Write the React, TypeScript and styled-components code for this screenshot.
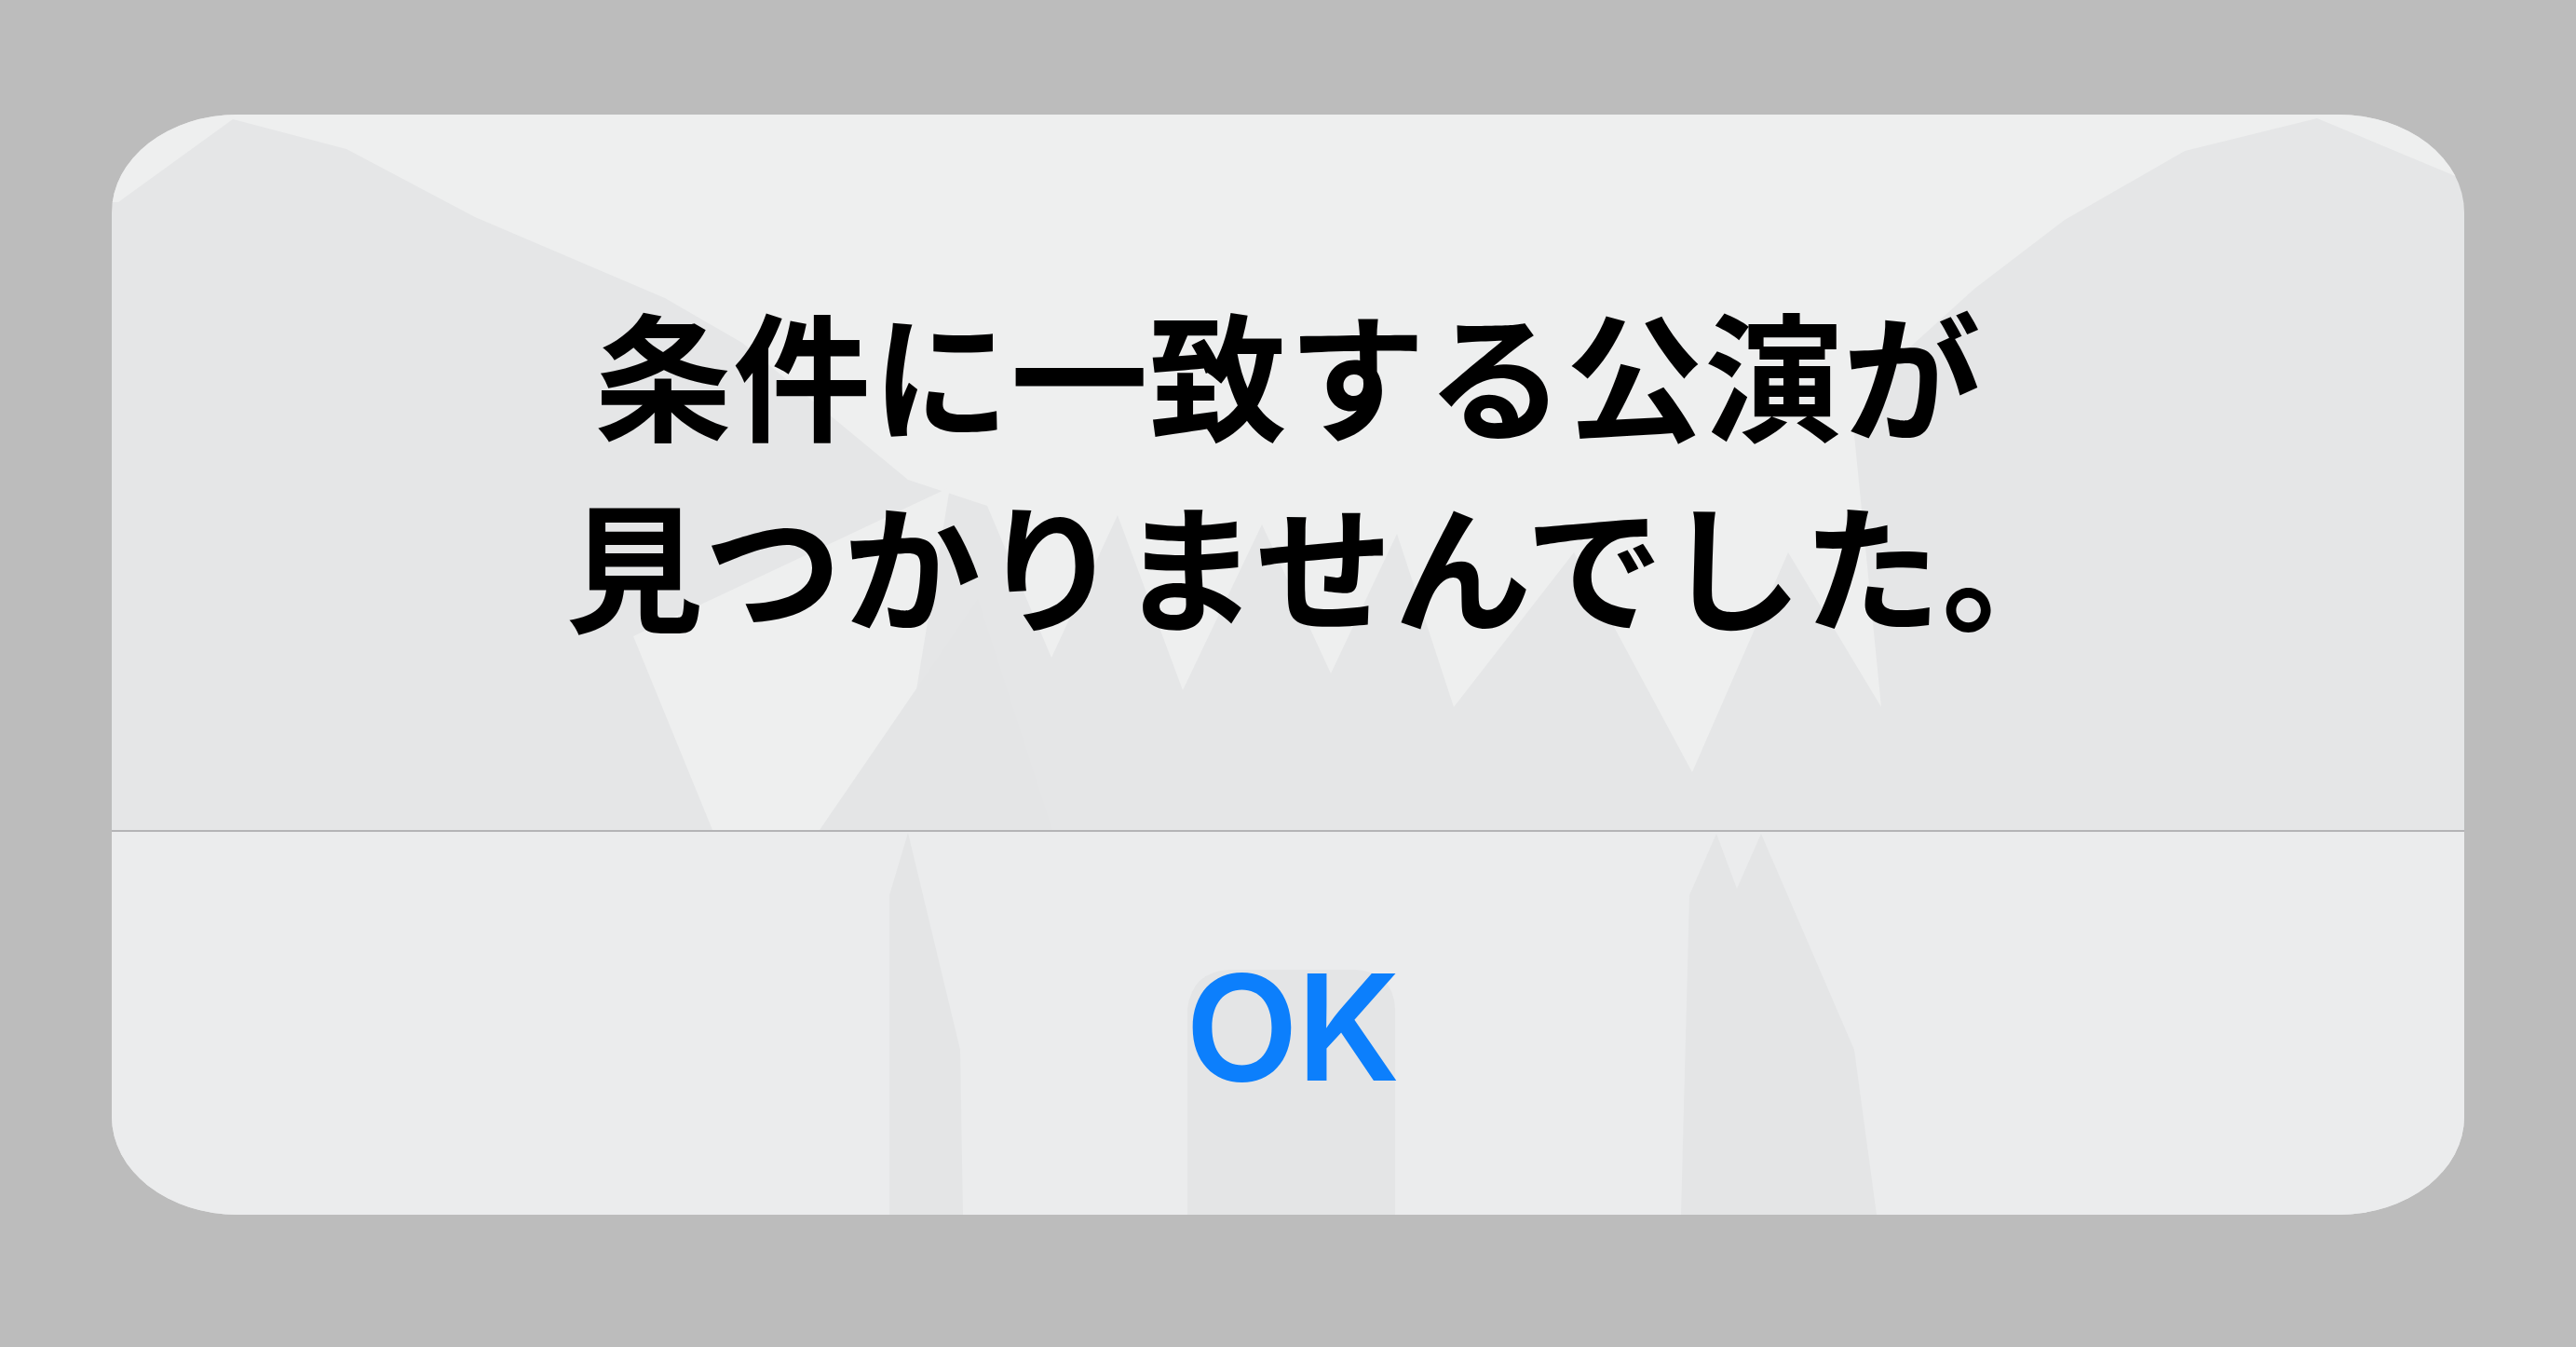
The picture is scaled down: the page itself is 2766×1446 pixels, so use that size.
import React from "react";
import styled, { createGlobalStyle } from "styled-components";

const GlobalStyle = createGlobalStyle`
  html, body {
    margin: 0;
    padding: 0;
    background: #bcbcbc;
  }
  #root {
    min-height: 100vh;
  }
`;

const Page = styled.div`
  width: 2766px;
  height: 1446px;
  box-sizing: border-box;
  padding-top: 123px;
  display: flex;
  justify-content: center;
  align-items: flex-start;
  background: #bcbcbc;
`;

const Dialog = styled.div`
  position: relative;
  width: 2526px;
  height: 1181px;
  border-radius: 135px / 105px;
  overflow: hidden;
  background: #e5e6e7;
  display: flex;
  flex-direction: column;
`;

const Backdrop = styled.svg`
  position: absolute;
  inset: 0;
  width: 100%;
  height: 100%;
  z-index: 0;
`;

const Message = styled.div`
  position: relative;
  z-index: 1;
  height: 768px;
  box-sizing: border-box;
  padding-bottom: 14px;
  display: flex;
  align-items: center;
  justify-content: center;
`;

const Title = styled.p`
  margin: 0;
  text-align: center;
  font-family: "Noto Sans CJK JP", "Noto Sans", sans-serif;
  font-weight: 700;
  font-size: 148px;
  line-height: 205px;
  letter-spacing: 1px;
  color: #000;
`;

const Punct = styled.span`
  letter-spacing: -0.5em;
`;

const Divider = styled.div`
  position: relative;
  z-index: 1;
  height: 2px;
  background: #b4b4b6;
`;

const ButtonRow = styled.div`
  position: relative;
  z-index: 1;
  flex: 1;
  display: flex;
  align-items: center;
  justify-content: center;
`;

const ActionButton = styled.button`
  border: none;
  background: transparent;
  padding: 0;
  font-family: Inter, "Noto Sans", sans-serif;
  font-weight: 600;
  font-size: 158px;
  line-height: 1;
  letter-spacing: -2px;
  color: #0c7ffc;
  cursor: pointer;
  transform: translate(4px, 4px);
`;

const LIGHT = "#eeefef";
const LIGHT_BTN = "#ebeced";
const DARK = "#e4e5e6";

export default function App() {
  return (
    <>
      <GlobalStyle />
      <Page>
        <Dialog role="alertdialog">
          <Backdrop viewBox="0 0 2526 1181" preserveAspectRatio="none" aria-hidden="true">
            <polygon
              fill={LIGHT}
              points="0,0 2526,0 2526,70 2368,4 2226,39 2097,113 2000,187 1903,275 1871,344 1900,636 1800,470 1697,706 1570,470 1441,636 1380,450 1309,600 1235,440 1150,618 1080,430 1009,583 940,420 855,392 677,245 594,197 390,110 252,37 130,5 7,94 0,94"
            />
            <polygon fill={LIGHT} points="560,560 900,400 839,768 645,768" />
            <polygon fill={DARK} points="760,768 930,520 1010,768" />
            <rect x="0" y="770" width="2526" height="411" fill={LIGHT_BTN} />
            <polygon fill={DARK} points="855,771 835,838 835,1181 914,1181 911,1004" />
            <path fill={DARK} d="M1155,1181 L1155,960 Q1160,920 1200,918 L1335,918 Q1376,920 1378,960 L1378,1181 Z" />
            <polygon fill={DARK} points="1723,772 1745,831 1771,772 1871,1004 1895,1181 1685,1181 1694,838" />
          </Backdrop>
          <Message>
            <Title>
              条件に一致する公演が
              <br />
              見つかりませんでした<Punct>。</Punct>
            </Title>
          </Message>
          <Divider />
          <ButtonRow>
            <ActionButton type="button">OK</ActionButton>
          </ButtonRow>
        </Dialog>
      </Page>
    </>
  );
}
